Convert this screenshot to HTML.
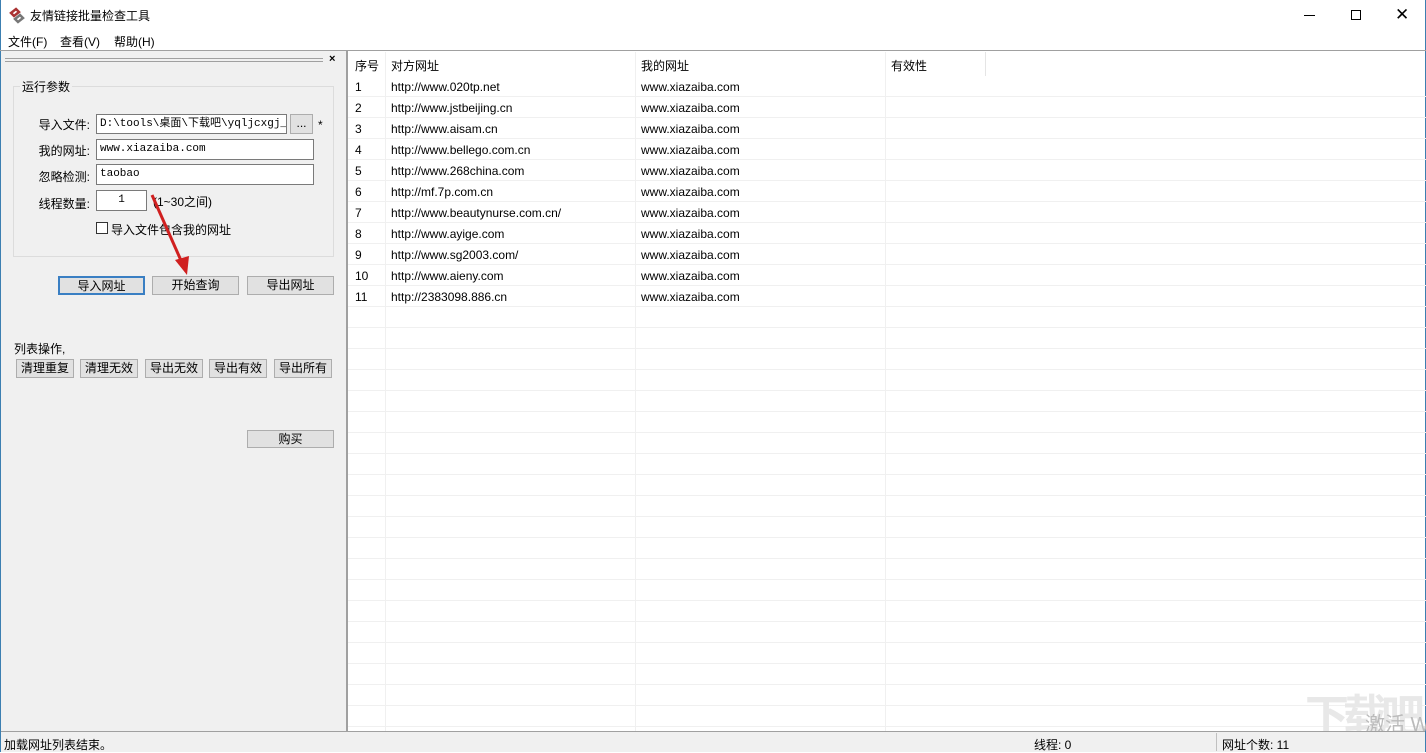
<!DOCTYPE html>
<html><head><meta charset="utf-8"><style>
*{box-sizing:border-box;margin:0;padding:0}
body{width:1426px;height:752px;overflow:hidden;background:#fff;font-family:"Liberation Sans","Noto Sans CJK SC",sans-serif;font-size:12px;color:#000;position:relative}
.a{position:absolute;white-space:nowrap}
.btn{position:absolute;background:#e1e1e1;border:1px solid #adadad;text-align:center;font-size:12px;line-height:16px}
.inp{position:absolute;background:#fff;border:1px solid #7a7a7a;font-family:"Liberation Mono","Noto Sans CJK SC",monospace;font-size:11px;padding-left:3px;line-height:18px;white-space:nowrap;overflow:hidden}
.lbl{position:absolute;font-size:12px;text-align:right;width:60px}
.row{position:absolute;left:348px;width:1078px;height:21px;border-bottom:1px solid #f0f0f0}
.row span{position:absolute;top:4px;font-size:12px}
</style></head><body>
<div class="a" style="left:0;top:0;width:1426px;height:752px;border:1px solid #3c7fb1;border-top:none"></div>
<svg class="a" style="left:8px;top:7px" width="18" height="18" viewBox="0 0 18 18"><path d="M3 6 L8 2 L11 5 L6 9 Z" fill="none" stroke="#a33" stroke-width="2.5"/><path d="M7 12 L12 8 L15 11 L10 15 Z" fill="none" stroke="#777" stroke-width="2.5"/></svg>
<div class="a" style="left:30px;top:7px;font-size:12px">友情链接批量检查工具</div>
<div class="a" style="left:1304px;top:15px;width:11px;height:1px;background:#000"></div>
<div class="a" style="left:1351px;top:10px;width:10px;height:10px;border:1px solid #000"></div>
<div class="a" style="left:1395px;top:5px;font-size:17px;line-height:20px">✕</div>
<div class="a" style="left:8px;top:33px">文件(F)</div>
<div class="a" style="left:60px;top:33px">查看(V)</div>
<div class="a" style="left:114px;top:33px">帮助(H)</div>
<div class="a" style="left:0;top:50px;width:1426px;height:1px;background:#a0a0a0"></div>
<div class="a" style="left:1px;top:51px;width:345px;height:680px;background:#f0f0f0"></div>
<div class="a" style="left:346px;top:51px;width:2px;height:680px;background:#a0a0a0"></div>
<div class="a" style="left:5px;top:58px;width:318px;height:4px;border-top:1px solid #a0a0a0;border-bottom:1px solid #a0a0a0"></div>
<div class="a" style="left:329px;top:53px;font-size:11px;font-weight:bold">×</div>
<div class="a" style="left:13px;top:86px;width:321px;height:171px;border:1px solid #dcdcdc"></div>
<div class="a" style="left:20px;top:78px;background:#f0f0f0;padding:0 2px">运行参数</div>
<div class="lbl" style="left:30px;top:116px">导入文件:</div>
<div class="inp" style="left:96px;top:114px;width:191px;height:20px">D:\tools\桌面\下载吧\yqljcxgj_v</div>
<div class="btn" style="left:290px;top:114px;width:23px;height:20px;line-height:16px">...</div>
<div class="a" style="left:318px;top:118px">*</div>
<div class="lbl" style="left:30px;top:142px">我的网址:</div>
<div class="inp" style="left:96px;top:139px;width:218px;height:21px">www.xiazaiba.com</div>
<div class="lbl" style="left:30px;top:168px">忽略检测:</div>
<div class="inp" style="left:96px;top:164px;width:218px;height:21px">taobao</div>
<div class="lbl" style="left:30px;top:195px">线程数量:</div>
<div class="inp" style="left:96px;top:190px;width:51px;height:21px;text-align:center;padding:0">1</div>
<div class="a" style="left:153px;top:193px">(1~30之间)</div>
<div class="a" style="left:96px;top:222px;width:12px;height:12px;border:1px solid #333;background:#fff"></div>
<div class="a" style="left:111px;top:221px">导入文件包含我的网址</div>
<div class="btn" style="left:58px;top:276px;width:87px;height:19px;border:2px solid #3a7fc3">导入网址</div>
<div class="btn" style="left:152px;top:276px;width:87px;height:19px">开始查询</div>
<div class="btn" style="left:247px;top:276px;width:87px;height:19px">导出网址</div>
<svg class="a" style="left:145px;top:190px" width="50" height="90"><line x1="7" y1="5" x2="38" y2="75" stroke="#d02020" stroke-width="3"/><path d="M30 70 L42 85 L44 66 Z" fill="#d02020"/></svg>
<div class="a" style="left:14px;top:340px">列表操作,</div>
<div class="btn" style="left:16px;top:359px;width:58px;height:19px">清理重复</div>
<div class="btn" style="left:80px;top:359px;width:58px;height:19px">清理无效</div>
<div class="btn" style="left:145px;top:359px;width:58px;height:19px">导出无效</div>
<div class="btn" style="left:209px;top:359px;width:58px;height:19px">导出有效</div>
<div class="btn" style="left:274px;top:359px;width:58px;height:19px">导出所有</div>
<div class="btn" style="left:247px;top:430px;width:87px;height:18px">购买</div>
<div class="a" style="left:385px;top:52px;width:1px;height:679px;background:#f0f0f0"></div>
<div class="a" style="left:635px;top:52px;width:1px;height:679px;background:#f0f0f0"></div>
<div class="a" style="left:885px;top:52px;width:1px;height:679px;background:#f0f0f0"></div>
<div class="a" style="left:985px;top:52px;width:1px;height:24px;background:#e5e5e5"></div>
<div class="a" style="left:355px;top:57px">序号</div>
<div class="a" style="left:391px;top:57px">对方网址</div>
<div class="a" style="left:641px;top:57px">我的网址</div>
<div class="a" style="left:891px;top:57px">有效性</div>
<div id="rows"></div>
<div class="a" style="left:1305px;top:692px;font-size:44px;line-height:50px;color:#e8e8e8;font-weight:bold;letter-spacing:-6px;overflow:hidden;width:121px;height:60px">下载吧</div>
<div class="a" style="left:1365px;top:708px;font-size:20px;color:#bbb">激活 W</div>
<div class="a" style="left:1px;top:731px;width:1424px;height:21px;background:#f0f0f0;border-top:1px solid #a0a0a0"></div>
<div class="a" style="left:4px;top:736px">加载网址列表结束。</div>
<div class="a" style="left:1034px;top:736px">线程: 0</div>
<div class="a" style="left:1216px;top:733px;width:1px;height:18px;background:#c0c0c0"></div>
<div class="a" style="left:1222px;top:736px">网址个数: 11</div>
<script>
var d=["http://www.020tp.net","http://www.jstbeijing.cn","http://www.aisam.cn","http://www.bellego.com.cn","http://www.268china.com","http://mf.7p.com.cn","http://www.beautynurse.com.cn/","http://www.ayige.com","http://www.sg2003.com/","http://www.aieny.com","http://2383098.886.cn"];
var h="";for(var i=0;i<31;i++){var t=76+i*21;h+='<div class="row" style="top:'+t+'px">'+(i<11?'<span style="left:7px">'+(i+1)+'</span><span style="left:43px">'+d[i]+'</span><span style="left:293px">www.xiazaiba.com</span>':'')+'</div>';}
document.getElementById("rows").innerHTML=h;
</script>
</body></html>
